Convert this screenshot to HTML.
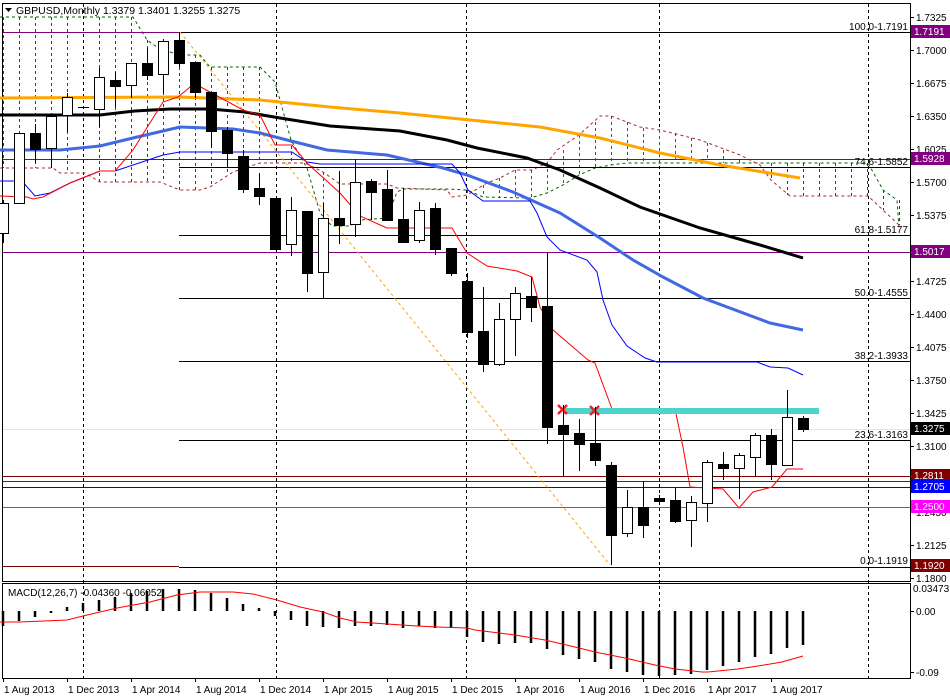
<!DOCTYPE html>
<html><head><meta charset="utf-8"><style>
html,body{margin:0;padding:0;background:#fff;}
svg{display:block;font-family:"Liberation Sans",sans-serif;}
</style></head><body>
<svg width="950" height="700" viewBox="0 0 950 700" xmlns="http://www.w3.org/2000/svg">
<rect width="950" height="700" fill="#fff"/>
<!-- frames -->
<rect x="2.5" y="3.5" width="908" height="578" fill="none" stroke="#000"/>
<rect x="2.5" y="583.5" width="908" height="95" fill="none" stroke="#000"/>
<!-- vertical grid dashed -->
<g stroke="#000" stroke-dasharray="3,3" stroke-width="1">
<path d="M83.5 4V678M276.5 4V678M466.5 4V678M659.5 4V678M868.5 4V678"/>
</g>
<!-- ichimoku cloud verticals -->
<path fill="none" stroke="#006400" stroke-dasharray="3,3" d="M3.5 17V168M19.5 17V168M35.5 17V168M51.5 17V168M67.5 17V173M99.5 17V182M115.5 17V182M131.5 17V182M147.5 40V182M163.5 50V182M179.5 55V190M195.5 55V190M211.5 67V187M227.5 67V174M243.5 67V163M259.5 67V163M291.5 140V163M883.5 190V210M899.5 200V225M771.5 163V180M787.5 163V195M803.5 163V196M819.5 163V196M835.5 163V196M851.5 163V196M867.5 163V196"/>
<path fill="none" stroke="#A52A2A" stroke-dasharray="3,3" d="M323.5 172V215M339.5 184V226M355.5 184V224M371.5 184V218M387.5 184V218M467.5 190V195M483.5 185V197M499.5 178V198M515.5 170V198M531.5 170V198M547.5 163V193M563.5 150V185M579.5 135V175M595.5 122V168M611.5 116V165M627.5 122V163M643.5 128V163M659.5 130V163M675.5 133V163M691.5 138V163M707.5 143V163M723.5 150V163M739.5 160V163"/>
<polyline fill="none" stroke="#006400" stroke-dasharray="3,3" points="0,17 133,17 147,40 157,47 163,50 180,55 200,55 210,67 260,67 275,82 291,140 307,168 320,213 332,226 350,226 360,220 387,218 397,192 403,189 447,189 467,190 483,197 530,198 547,193 563,185 579,175 595,168 611,165 627,163 868,163 883,190 897,200 899,228"/>
<polyline fill="none" stroke="#A52A2A" stroke-dasharray="3,3" points="0,168 53,168 60,173 85,173 100,182 160,182 180,190 200,190 210,187 233,172 260,163 305,163 323,172 340,184 387,184 397,188 447,190 452,197 467,195 487,183 500,178 515,170 532,170 547,163 557,150 579,135 600,116 611,116 640,127 660,130 700,140 740,155 760,165 771,180 790,196 868,196 883,210 899,225"/>
<!-- horizontal levels -->
<g stroke-width="1" fill="none">
<path stroke="#800080" d="M3 32.5H179"/>
<path stroke="#000" d="M179 32.5H910M179 167.5H910M179 235.5H910M179 298.5H910M179 361.5H910M179 440.5H910M179 567.5H910"/>
<path stroke="#800080" d="M3 159.5H910M3 252.5H910M3 481.5H910"/>
<path stroke="#800000" d="M3 476.5H910M3 566.5H179"/>
<path stroke="#0000FF" d="M3 487.5H910"/>
<path stroke="#FF00FF" d="M3 507.5H910"/>
<path stroke="#E4E4EE" d="M3 429.5H910"/>
</g>
<!-- orange diagonal -->
<line x1="180" y1="32" x2="610" y2="565" stroke="#FFA500" stroke-dasharray="3,3"/>
<!-- moving averages -->
<polyline fill="none" stroke="#FFA500" stroke-width="3" points="0,98 180,97 260,100 330,107 400,113 470,120 540,127 600,138 660,153 720,165 800,178"/>
<polyline fill="none" stroke="#000" stroke-width="3" points="0,115 100,115 135,111 170,109 210,109 245,112 280,118 330,126 400,131 447,140 477,148 527,158 560,170 600,188 640,207 700,228 760,245 803,258"/>
<polyline fill="none" stroke="#4169E1" stroke-width="3" points="0,150 60,150 100,146 133,138 180,127 233,129 260,133 287,140 327,150 387,155 443,168 467,175 513,192 560,213 600,238 633,260 663,277 703,298 770,323 803,330"/>
<polyline fill="none" stroke="#0000FF" stroke-width="1" points="0,181 22,181 35,196 50,193 70,183 100,171 115,171 133,165 163,155 180,152 292,152 307,162 320,164 452,164 460,173 468,190 483,201 530,201 537,213 547,237 560,250 587,260 597,272 603,300 612,325 627,346 645,358 657,362 757,362 770,367 788,368 803,375"/>
<polyline fill="none" stroke="#FF0000" stroke-width="1" points="0,196 27,197 33,199 43,197 70,183 100,171 115,171 133,150 163,102 178,97 190,87 195,84 210,92 243,110 260,115 275,145 292,145 307,163 340,193 360,216 387,228 452,228 467,253 487,266 517,271 532,277 540,307 553,330 588,360 595,363 612,409 675,409 683,447 690,487 723,489 739,508 753,492 772,487 787,469 803,469"/>
<!-- cyan band -->
<rect x="563" y="408" width="256" height="6" fill="#4FD3CF"/>
<g stroke="#F02020" stroke-width="2.5"><path d="M558 405L567 414M567 405L558 414M590 406L599 415M599 406L590 415"/></g>
<!-- candles -->
<g stroke="#000" stroke-width="1">
<path d="M3.5 200V243M19.5 133V203M35.5 124V163M51.5 116V168M67.5 93V132M99.5 68V127M115.5 72V107M131.5 63V98M147.5 48V80M163.5 39V93M179.5 32V67M195.5 62V98M211.5 92V148M227.5 127V167M243.5 150V193M259.5 173V205M275.5 198V250M291.5 197V256M307.5 211V292M323.5 203V299M339.5 171V244M355.5 159V237M371.5 179V220M387.5 170V220M403.5 188V243M419.5 202V243M435.5 203V255M451.5 248V276M467.5 273V338M483.5 287V372M499.5 303V366M515.5 287V356M531.5 277V322M547.5 253V444M563.5 405V477M579.5 419V471M595.5 407V466M611.5 462V565M627.5 490V537M643.5 481V538M659.5 495V505M675.5 488V523M691.5 496V547M707.5 460V522M723.5 452V480M739.5 453V499M755.5 433V476M771.5 429V480M787.5 390V465M803.5 416V432M78 107.5H89"/>
</g>
<g stroke="#000" stroke-width="1" fill="#fff">
<rect x="-1.5" y="203.5" width="10" height="30"/>
<rect x="14.5" y="133.5" width="10" height="70"/>
<rect x="46.5" y="116.5" width="10" height="32"/>
<rect x="62.5" y="97.5" width="10" height="18"/>
<rect x="94.5" y="77.5" width="10" height="32"/>
<rect x="126.5" y="63.5" width="10" height="22"/>
<rect x="158.5" y="41.5" width="10" height="33"/>
<rect x="286.5" y="210.5" width="10" height="34"/>
<rect x="318.5" y="218.5" width="10" height="54"/>
<rect x="350.5" y="182.5" width="10" height="42"/>
<rect x="414.5" y="210.5" width="10" height="30"/>
<rect x="494.5" y="319.5" width="10" height="45"/>
<rect x="510.5" y="293.5" width="10" height="26"/>
<rect x="622.5" y="507.5" width="10" height="26"/>
<rect x="686.5" y="502.5" width="10" height="18"/>
<rect x="702.5" y="462.5" width="10" height="41"/>
<rect x="734.5" y="455.5" width="10" height="13"/>
<rect x="750.5" y="435.5" width="10" height="22"/>
<rect x="782.5" y="417.5" width="10" height="48"/>
</g>
<g stroke="#000" stroke-width="1" fill="#000">
<rect x="30.5" y="133.5" width="10" height="16"/>
<rect x="110.5" y="80.5" width="10" height="6"/>
<rect x="142.5" y="63.5" width="10" height="12"/>
<rect x="174.5" y="40.5" width="10" height="23"/>
<rect x="190.5" y="62.5" width="10" height="30"/>
<rect x="206.5" y="92.5" width="10" height="39"/>
<rect x="222.5" y="130.5" width="10" height="23"/>
<rect x="238.5" y="156.5" width="10" height="33"/>
<rect x="254.5" y="188.5" width="10" height="8"/>
<rect x="270.5" y="198.5" width="10" height="51"/>
<rect x="302.5" y="211.5" width="10" height="62"/>
<rect x="334.5" y="218.5" width="10" height="7"/>
<rect x="366.5" y="181.5" width="10" height="11"/>
<rect x="382.5" y="189.5" width="10" height="31"/>
<rect x="398.5" y="219.5" width="10" height="23"/>
<rect x="430.5" y="208.5" width="10" height="41"/>
<rect x="446.5" y="248.5" width="10" height="25"/>
<rect x="462.5" y="281.5" width="10" height="51"/>
<rect x="478.5" y="331.5" width="10" height="33"/>
<rect x="526.5" y="296.5" width="10" height="11"/>
<rect x="542.5" y="306.5" width="10" height="121"/>
<rect x="558.5" y="425.5" width="10" height="9"/>
<rect x="574.5" y="433.5" width="10" height="11"/>
<rect x="590.5" y="443.5" width="10" height="17"/>
<rect x="606.5" y="465.5" width="10" height="70"/>
<rect x="638.5" y="507.5" width="10" height="18"/>
<rect x="654.5" y="498.5" width="10" height="3"/>
<rect x="670.5" y="500.5" width="10" height="21"/>
<rect x="718.5" y="464.5" width="10" height="4"/>
<rect x="766.5" y="435.5" width="10" height="29"/>
<rect x="798.5" y="418.5" width="10" height="11"/>
</g>
<!-- fib labels -->
<g font-size="10" text-anchor="end" fill="#000">
<text x="908" y="30">100.0-1.7191</text>
<text x="908" y="165">74.6-1.5852</text>
<text x="908" y="233">61.8-1.5177</text>
<text x="908" y="296">50.0-1.4555</text>
<text x="908" y="359">38.2-1.3933</text>
<text x="908" y="438">23.6-1.3163</text>
<text x="908" y="564">0.0-1.1919</text>
</g>
<!-- title -->
<path d="M5 8H12L8.5 12Z" fill="#000"/>
<text x="16" y="14" font-size="10.5" fill="#000">GBPUSD,Monthly  1.3379 1.3401 1.3255 1.3275</text>
<!-- MACD -->
<g stroke="#000" stroke-width="2.5">
<path d="M3 611V626M19 611V621M35 611V617M51 611V613M67 611V607M83 611V603M99 611V600M115 611V597M131 611V593M147 611V591M163 611V589M179 611V589M195 611V590M211 611V593M227 611V598M243 611V604M259 611V608M275 611V616M291 611V620M307 611V626M323 611V627M339 611V628M355 611V626M371 611V626M387 611V625M403 611V628M419 611V626M435 611V628M451 611V628M467 611V637M483 611V642M499 611V644M515 611V643M531 611V643M547 611V649M563 611V655M579 611V659M595 611V662M611 611V669M627 611V672M643 611V675M659 611V676M675 611V675M691 611V674M707 611V670M723 611V666M739 611V662M755 611V657M771 611V654M787 611V648M803 611V645"/>
</g>
<polyline fill="none" stroke="#FF0000" points="0,622 20,622 67,620 83,616 117,608 150,602 177,595 200,592 233,592 253,594 277,600 300,607 323,612 340,618 357,622 387,624 417,626 437,627 467,628 475,630 515,635 545,640 575,647 595,652 625,658 655,665 675,669 702,672 708,672 738,669 758,666 782,662 803,656"/>
<text x="8" y="596" font-size="10" fill="#000">MACD(12,26,7) -0.04360 -0.06052</text>
<!-- price axis -->
<g stroke="#000"><path d="M910 17.5h4M910 50.5h4M910 83.5h4M910 116.5h4M910 149.5h4M910 182.5h4M910 215.5h4M910 248.5h4M910 281.5h4M910 314.5h4M910 347.5h4M910 380.5h4M910 413.5h4M910 446.5h4M910 479.5h4M910 512.5h4M910 545.5h4M910 578.5h4M910 611.5h4M910 672.5h4"/></g>
<g font-size="10" fill="#000">
<text x="916" y="21">1.7325</text>
<text x="916" y="54">1.7000</text>
<text x="916" y="87">1.6675</text>
<text x="916" y="120">1.6350</text>
<text x="916" y="153">1.6025</text>
<text x="916" y="186">1.5700</text>
<text x="916" y="219">1.5375</text>
<text x="916" y="285">1.4725</text>
<text x="916" y="318">1.4400</text>
<text x="916" y="351">1.4075</text>
<text x="916" y="384">1.3750</text>
<text x="916" y="417">1.3425</text>
<text x="916" y="450">1.3100</text>
<text x="916" y="516">1.2450</text>
<text x="916" y="549">1.2125</text>
<text x="916" y="582">1.1800</text>
<text x="913" y="592">0.03473</text>
<text x="916" y="615">0.00</text>
<text x="916" y="676">-0.09</text>
</g>
<g font-size="10">
<rect x="911" y="25" width="39" height="13" fill="#800080"/><text x="914" y="35" fill="#fff">1.7191</text>
<rect x="911" y="152" width="39" height="13" fill="#800080"/><text x="914" y="162" fill="#fff">1.5928</text>
<rect x="911" y="245" width="39" height="13" fill="#800080"/><text x="914" y="255" fill="#fff">1.5017</text>
<rect x="911" y="422" width="39" height="13" fill="#000"/><text x="914" y="432" fill="#fff">1.3275</text>
<rect x="911" y="469" width="39" height="13" fill="#800000"/><text x="914" y="479" fill="#fff">1.2811</text>
<rect x="911" y="480" width="39" height="13" fill="#0000FF"/><text x="914" y="490" fill="#fff">1.2705</text>
<rect x="911" y="500" width="39" height="13" fill="#FF00FF"/><text x="914" y="510" fill="#fff">1.2500</text>
<rect x="911" y="559" width="39" height="13" fill="#800000"/><text x="914" y="569" fill="#fff">1.1920</text>
</g>
<!-- time axis -->
<g stroke="#000"><path d="M3.5 678v4M67.5 678v4M131.5 678v4M195.5 678v4M259.5 678v4M323.5 678v4M387.5 678v4M451.5 678v4M515.5 678v4M579.5 678v4M643.5 678v4M707.5 678v4M771.5 678v4"/></g>
<g font-size="10" fill="#000">
<text x="4" y="693">1 Aug 2013</text>
<text x="68" y="693">1 Dec 2013</text>
<text x="132" y="693">1 Apr 2014</text>
<text x="196" y="693">1 Aug 2014</text>
<text x="260" y="693">1 Dec 2014</text>
<text x="324" y="693">1 Apr 2015</text>
<text x="388" y="693">1 Aug 2015</text>
<text x="452" y="693">1 Dec 2015</text>
<text x="516" y="693">1 Apr 2016</text>
<text x="580" y="693">1 Aug 2016</text>
<text x="644" y="693">1 Dec 2016</text>
<text x="708" y="693">1 Apr 2017</text>
<text x="772" y="693">1 Aug 2017</text>
</g>
</svg>
</body></html>
